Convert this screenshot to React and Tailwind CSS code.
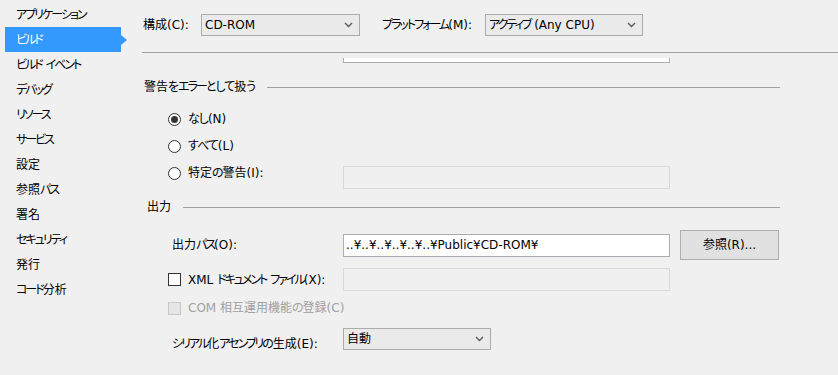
import React from "react";

const font = "font-['DejaVu_Sans','Noto_Sans_CJK_JP',sans-serif] [font-feature-settings:'palt']";

// Meiryo UI の仮名は狭いので、仮名の連続だけ字間を詰める
function T({ children }) {
  const parts = String(children).split(/([\u30A0-\u30FF]+|[\u3040-\u309F]+)/);
  return parts.map((p, i) => {
    if (!p) return null;
    if (/^[\u30A0-\u30FF]+$/.test(p)) {
      return (
        <span key={i} className="tracking-[-2px]">
          {p}
        </span>
      );
    }
    if (/^[\u3040-\u309F]+$/.test(p)) {
      return (
        <span key={i} className="tracking-[-1px]">
          {p}
        </span>
      );
    }
    return <React.Fragment key={i}>{p}</React.Fragment>;
  });
}

const navItems = [
  "アプリケーション",
  "ビルド",
  "ビルド イベント",
  "デバッグ",
  "リソース",
  "サービス",
  "設定",
  "参照パス",
  "署名",
  "セキュリティ",
  "発行",
  "コード分析",
];

function Chevron() {
  return (
    <svg width="9" height="6" viewBox="0 0 9 6" className="shrink-0">
      <polyline points="1,1 4.5,4.5 8,1" fill="none" stroke="#5a5a5a" strokeWidth="1.4" />
    </svg>
  );
}

function Select({ value, width }) {
  return (
    <div
      className={`${width} h-[22px] border border-[#acacac] bg-[#eaeaea] flex items-center justify-between pl-[3px] pr-[6px]`}
    >
      <span className="leading-none whitespace-nowrap">
        <T>{value}</T>
      </span>
      <Chevron />
    </div>
  );
}

function TextBox({ value, disabled }) {
  return (
    <div
      className={`w-[327px] h-[23px] border flex items-center pl-[2px] whitespace-nowrap ${
        disabled ? "bg-[#f0f0f0] border-[#d9d9d9]" : "bg-white border-[#abadb3]"
      }`}
    >
      {value}
    </div>
  );
}

function Radio({ checked }) {
  return (
    <div className="w-[13px] h-[13px] rounded-full border border-[#333] bg-white flex items-center justify-center shrink-0">
      {checked && <div className="w-[7px] h-[7px] rounded-full bg-[#333]" />}
    </div>
  );
}

function Checkbox({ disabled }) {
  return (
    <div
      className={`w-[13px] h-[13px] border shrink-0 ${
        disabled ? "border-[#c9c9c9] bg-[#e6e6e6]" : "border-[#333] bg-white"
      }`}
    />
  );
}

function SectionHeader({ title, pad }) {
  return (
    <div className={`h-[20px] flex items-center mr-[58px] ${pad}`}>
      <span className="whitespace-nowrap">
        <T>{title}</T>
      </span>
      <div className="flex-1 h-px bg-[#a0a0a0] ml-[12px]" />
    </div>
  );
}

export default function App() {
  return (
    <div className={`w-[838px] h-[375px] bg-[#f0f0f0] flex text-[12px] text-black overflow-hidden ${font}`}>
      <div className="w-[142px] shrink-0 flex flex-col pt-[2px]">
        {navItems.map((item) =>
          item === "ビルド" ? (
            <div
              key={item}
              className="relative ml-[5px] w-[116px] h-[25px] pl-[11px] flex items-center bg-[#3399ff] text-white"
            >
              <span>
                <T>{item}</T>
              </span>
              <div className="absolute left-full top-1/2 -translate-y-1/2 w-0 h-0 border-y-[5px] border-y-transparent border-l-[6px] border-l-[#3399ff]" />
            </div>
          ) : (
            <div key={item} className="h-[25px] pl-[16px] flex items-center whitespace-nowrap">
              <span>
                <T>{item}</T>
              </span>
            </div>
          )
        )}
      </div>

      <div className="flex-1 flex flex-col">
        <div className="h-[53px] border-b border-[#a0a0a0] flex items-start pt-[14px] pl-[1px] shrink-0">
          <div className="w-[58px] h-[22px] flex items-center whitespace-nowrap">構成(C):</div>
          <Select value="CD-ROM" width="w-[159px]" />
          <div className="ml-[22px] w-[103px] h-[22px] flex items-center whitespace-nowrap">
            <span>
              <T>プラットフォーム(M):</T>
            </span>
          </div>
          <Select value="アクティブ (Any CPU)" width="w-[158px]" />
        </div>

        <div className="flex-1 pt-[5px] flex flex-col">
          <div className="flex-1 overflow-hidden flex flex-col">
            <div className="-mt-[19px] h-[24px] flex items-start shrink-0">
              <div className="ml-[201px] w-[327px] h-[24px] bg-white border border-[#abadb3]" />
            </div>

            <div className="mt-[14px]">
              <SectionHeader title="警告をエラーとして扱う" pad="pl-[2px]" />
            </div>

            <div className="mt-[9px] flex flex-col gap-[1px] pl-[26px]">
              <div className="h-[26px] flex items-center gap-[7px]">
                <Radio checked />
                <span>
                  <T>なし(N)</T>
                </span>
              </div>
              <div className="h-[26px] flex items-center gap-[7px]">
                <Radio />
                <span>
                  <T>すべて(L)</T>
                </span>
              </div>
              <div className="flex items-start">
                <div className="w-[175px] h-[26px] flex items-center gap-[7px]">
                  <Radio />
                  <span>
                    <T>特定の警告(I):</T>
                  </span>
                </div>
                <div className="mt-[6px]">
                  <TextBox disabled />
                </div>
              </div>
            </div>

            <div className="mt-[8px]">
              <SectionHeader title="出力" pad="pl-[5px]" />
            </div>

            <div className="mt-[13px] h-[30px] flex items-center pl-[30px]">
              <div className="w-[171px] whitespace-nowrap">
                <T>出力パス(O):</T>
              </div>
              <TextBox value="..¥..¥..¥..¥..¥..¥Public¥CD-ROM¥" />
              <button className="ml-[10px] w-[99px] h-[30px] bg-[#e1e1e1] border border-[#adadad] text-black">
                参照(R)...
              </button>
            </div>

            <div className="mt-[8px] h-[23px] flex items-center pl-[26px]">
              <div className="w-[175px] flex items-center gap-[7px] whitespace-nowrap">
                <Checkbox />
                <span>
                  <T>XML ドキュメント ファイル(X):</T>
                </span>
              </div>
              <TextBox disabled />
            </div>

            <div className="mt-[7px] h-[20px] flex items-center pl-[26px] gap-[7px] text-[#a0a0a0] whitespace-nowrap">
              <Checkbox disabled />
              <span>
                <T>COM 相互運用機能の登録(C)</T>
              </span>
            </div>

            <div className="mt-[10px] flex items-start pl-[30px]">
              <div className="w-[171px] mt-[8px] leading-[16px] whitespace-nowrap">
                <T>シリアル化アセンブリの生成(E):</T>
              </div>
              <Select value="自動" width="w-[148px]" />
            </div>
          </div>
        </div>
      </div>
    </div>
  );
}
